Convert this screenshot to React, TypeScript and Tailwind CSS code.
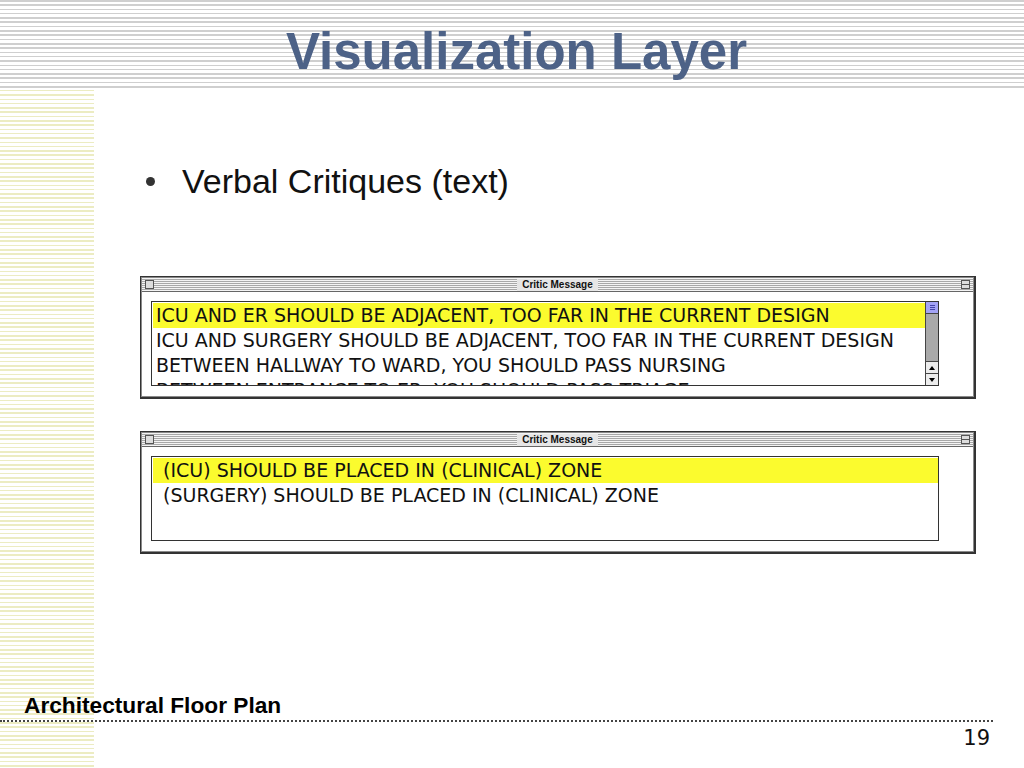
const critiquesA = [
  "ICU AND ER SHOULD BE ADJACENT, TOO FAR IN THE CURRENT DESIGN",
  "ICU AND SURGERY SHOULD BE ADJACENT, TOO FAR IN THE CURRENT DESIGN",
  "BETWEEN HALLWAY TO WARD, YOU SHOULD PASS NURSING",
  "BETWEEN ENTRANCE TO ER, YOU SHOULD PASS TRIAGE",
];

const critiquesB = [
  "(ICU) SHOULD BE PLACED IN (CLINICAL) ZONE",
  "(SURGERY) SHOULD BE PLACED IN (CLINICAL) ZONE",
];

function TitleBar() {
  return (
    <div className="flex h-[14px] items-center gap-[3px] border-b border-[#666] bg-[repeating-linear-gradient(to_bottom,#f4f4f4_0_1px,#a8a8a8_1px_2px)] px-[3px]">
      <span className="h-[9px] w-[9px] shrink-0 border border-[#555] bg-[#ddd]" />
      <div className="flex flex-1 justify-center">
        <span className="bg-[#e6e6e6] px-[5px] font-['Liberation_Sans',sans-serif] text-[10px] font-bold leading-[12px] text-[#111]">
          Critic Message
        </span>
      </div>
      <span className="flex h-[9px] w-[9px] shrink-0 flex-col justify-center border border-[#555] bg-[#ddd]">
        <span className="h-px w-full bg-[#555]" />
      </span>
    </div>
  );
}

function Scrollbar() {
  return (
    <div className="flex w-[13px] shrink-0 flex-col border-l border-[#444] bg-[#a9a9a9]">
      <div className="flex h-[12px] flex-col items-center justify-center gap-px border-b border-[#444] bg-[#a3a3f5]">
        <span className="h-px w-[5px] bg-[#4444aa]" />
        <span className="h-px w-[5px] bg-[#4444aa]" />
        <span className="h-px w-[5px] bg-[#4444aa]" />
      </div>
      <div className="flex-1" />
      <div className="flex h-[12px] items-center justify-center border-t border-[#444] bg-[#ececec]">
        <span className="h-0 w-0 border-x-[3px] border-b-[4px] border-x-transparent border-b-black" />
      </div>
      <div className="flex h-[12px] items-center justify-center border-t border-[#444] bg-[#ececec]">
        <span className="h-0 w-0 border-x-[3px] border-t-[4px] border-x-transparent border-t-black" />
      </div>
    </div>
  );
}

function CriticWindow({ lines, scroll }: { lines: string[]; scroll?: boolean }) {
  const rowPad = scroll ? "pl-[3px]" : "pl-[10px]";
  return (
    <div className="w-[836px] border border-[#333] border-b-2 border-r-2 bg-white">
      <div className="border border-[#8a8a8a] bg-white">
        <TitleBar />
        <div className="pb-[10px] pl-[9px] pr-[34px] pt-[9px]">
          <div className="flex h-[85px] overflow-hidden border border-[#333] bg-white">
            <div className="flex-1 overflow-hidden pl-px pt-px font-['DejaVu_Sans',sans-serif] text-[19px] leading-[25px] text-[#111]">
              {lines.map((line, i) => (
                <div
                  key={line}
                  className={
                    i === 0
                      ? `h-[25px] whitespace-nowrap bg-[#fbfb2e] ${rowPad}`
                      : `h-[25px] whitespace-nowrap ${rowPad}`
                  }
                >
                  {line}
                </div>
              ))}
            </div>
            {scroll && <Scrollbar />}
          </div>
        </div>
      </div>
    </div>
  );
}

export default function App() {
  return (
    <div className="relative flex h-[768px] w-[1024px] flex-col overflow-hidden bg-white">
      <header className="h-[90px] bg-[repeating-linear-gradient(to_bottom,#cfcfcf_0_1.5px,#ffffff_1.5px_4.3px)] pl-[9px] pt-[26px] text-center">
        <h1 className="font-['Liberation_Sans',sans-serif] text-[51px] font-bold leading-none text-[#4d6287]">
          Visualization Layer
        </h1>
      </header>

      <main className="flex flex-1 flex-col bg-[repeating-linear-gradient(to_bottom,#ececc2_0_1.5px,#ffffff_1.5px_4.3px)] bg-[length:94px_100%] bg-no-repeat">
        <div className="ml-[146px] mt-[74px] flex items-center">
          <span className="h-[9px] w-[9px] rounded-full bg-[#333]" />
          <span className="ml-[27px] font-['Liberation_Sans',sans-serif] text-[34px] leading-none text-[#111]">
            Verbal Critiques (text)
          </span>
        </div>

        <div className="ml-[140px] mt-[78px] flex flex-col gap-[32px]">
          <CriticWindow lines={critiquesA} scroll />
          <CriticWindow lines={critiquesB} />
        </div>

        <footer className="mt-auto pb-[19px]">
          <p className="pl-[24px] font-['Liberation_Sans',sans-serif] text-[22.7px] font-bold leading-none text-black">
            Architectural Floor Plan
          </p>
          <div className="mt-[3px] w-[993px] border-t-2 border-dotted border-[#444]" />
          <p className="mt-[6px] w-[990px] text-right font-['DejaVu_Sans',sans-serif] text-[21px] leading-none text-[#111]">
            19
          </p>
        </footer>
      </main>
    </div>
  );
}
